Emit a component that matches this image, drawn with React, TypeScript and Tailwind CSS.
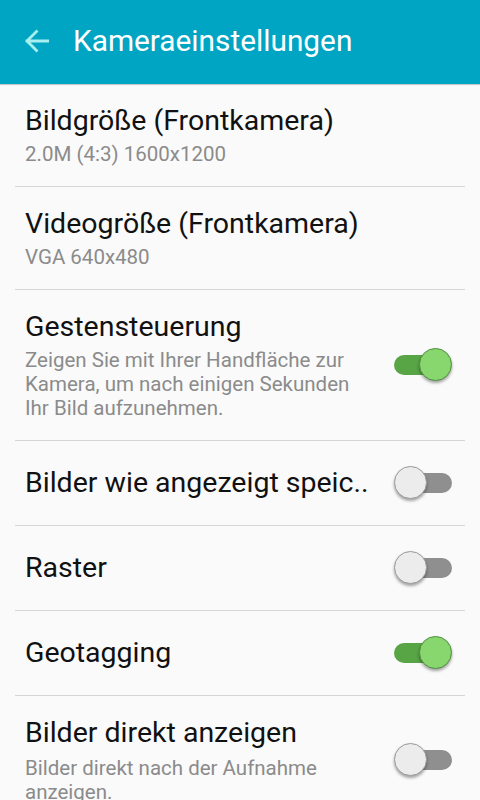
import React from "react";

function Toggle({ on }: { on: boolean }) {
  if (on) {
    return (
      <div className="relative w-[58px] h-[34px] shrink-0">
        <div className="absolute left-0 top-[7px] w-[50px] h-[20px] rounded-full bg-[#58a545]" />
        <div className="absolute right-0 top-0 w-[33px] h-[33px] rounded-full bg-[#88d66e] border border-[#4f8f3f] shadow-[0_2px_3px_rgba(0,0,0,0.35)]" />
      </div>
    );
  }
  return (
    <div className="relative w-[58px] h-[34px] shrink-0">
      <div className="absolute right-0 top-[7px] w-[50px] h-[20px] rounded-full bg-[#8f8f8f]" />
      <div className="absolute left-0 top-0 w-[33px] h-[33px] rounded-full bg-[#ececec] border border-[#9a9a9a] shadow-[0_2px_3px_rgba(0,0,0,0.35)]" />
    </div>
  );
}

function Row({
  title,
  sub,
  toggle,
  h,
  mt = "mt-[5px]",
}: {
  title: string;
  sub?: string[];
  toggle?: boolean | null;
  h: string;
  mt?: string;
}) {
  return (
    <div className={`flex items-center pl-[25px] pr-[28px] ${h}`}>
      <div className="flex-1 min-w-0">
        <div className="text-[28.5px] leading-[32px] text-[#111] whitespace-nowrap">{title}</div>
        {sub && (
          <div className={`text-[20.5px] leading-[24px] text-[#8b8b8b] ${mt}`}>
            {sub.map((s, i) => (
              <div key={i} className="whitespace-nowrap">{s}</div>
            ))}
          </div>
        )}
      </div>
      {toggle !== undefined && toggle !== null && <Toggle on={toggle} />}
    </div>
  );
}

function Divider() {
  return <div className="mx-[15px] h-px bg-[#d5d5d5]" />;
}

export default function App() {
  return (
    <div
      className="w-[480px] h-[800px] overflow-hidden bg-[#fafafa]"
      style={{ fontFamily: "Roboto, 'Noto Sans', sans-serif" }}
    >
      <div className="h-[84px] bg-[#00a5c4] flex items-center pl-[24px] shadow-[0_1px_1px_rgba(0,0,0,0.2)] relative z-10">
        <svg width="25" height="24" viewBox="0 0 25 24" className="mt-[-2px]">
          <path d="M24 12H3M12.5 2.5L3 12l9.5 9.5" fill="none" stroke="#a8f0ee" strokeWidth="2.8" strokeLinecap="square" />
        </svg>
        <div className="ml-[24px] text-[29.8px] text-white mt-[-2px]">Kameraeinstellungen</div>
      </div>
      <Row h="h-[102px]" title="Bildgröße (Frontkamera)" sub={["2.0M (4:3) 1600x1200"]} />
      <Divider />
      <Row h="h-[102px]" title="Videogröße (Frontkamera)" sub={["VGA 640x480"]} />
      <Divider />
      <Row
        h="h-[150px]"
        title="Gestensteuerung"
        sub={["Zeigen Sie mit Ihrer Handfläche zur", "Kamera, um nach einigen Sekunden", "Ihr Bild aufzunehmen."]}
        toggle={true}
      />
      <Divider />
      <Row h="h-[84px]" title="Bilder wie angezeigt speic.." toggle={false} />
      <Divider />
      <Row h="h-[84px]" title="Raster" toggle={false} />
      <Divider />
      <Row h="h-[84px]" title="Geotagging" toggle={true} />
      <Divider />
      <Row
        h="h-[128px]"
        mt="mt-[7px]"
        title="Bilder direkt anzeigen"
        sub={["Bilder direkt nach der Aufnahme", "anzeigen."]}
        toggle={false}
      />
    </div>
  );
}
